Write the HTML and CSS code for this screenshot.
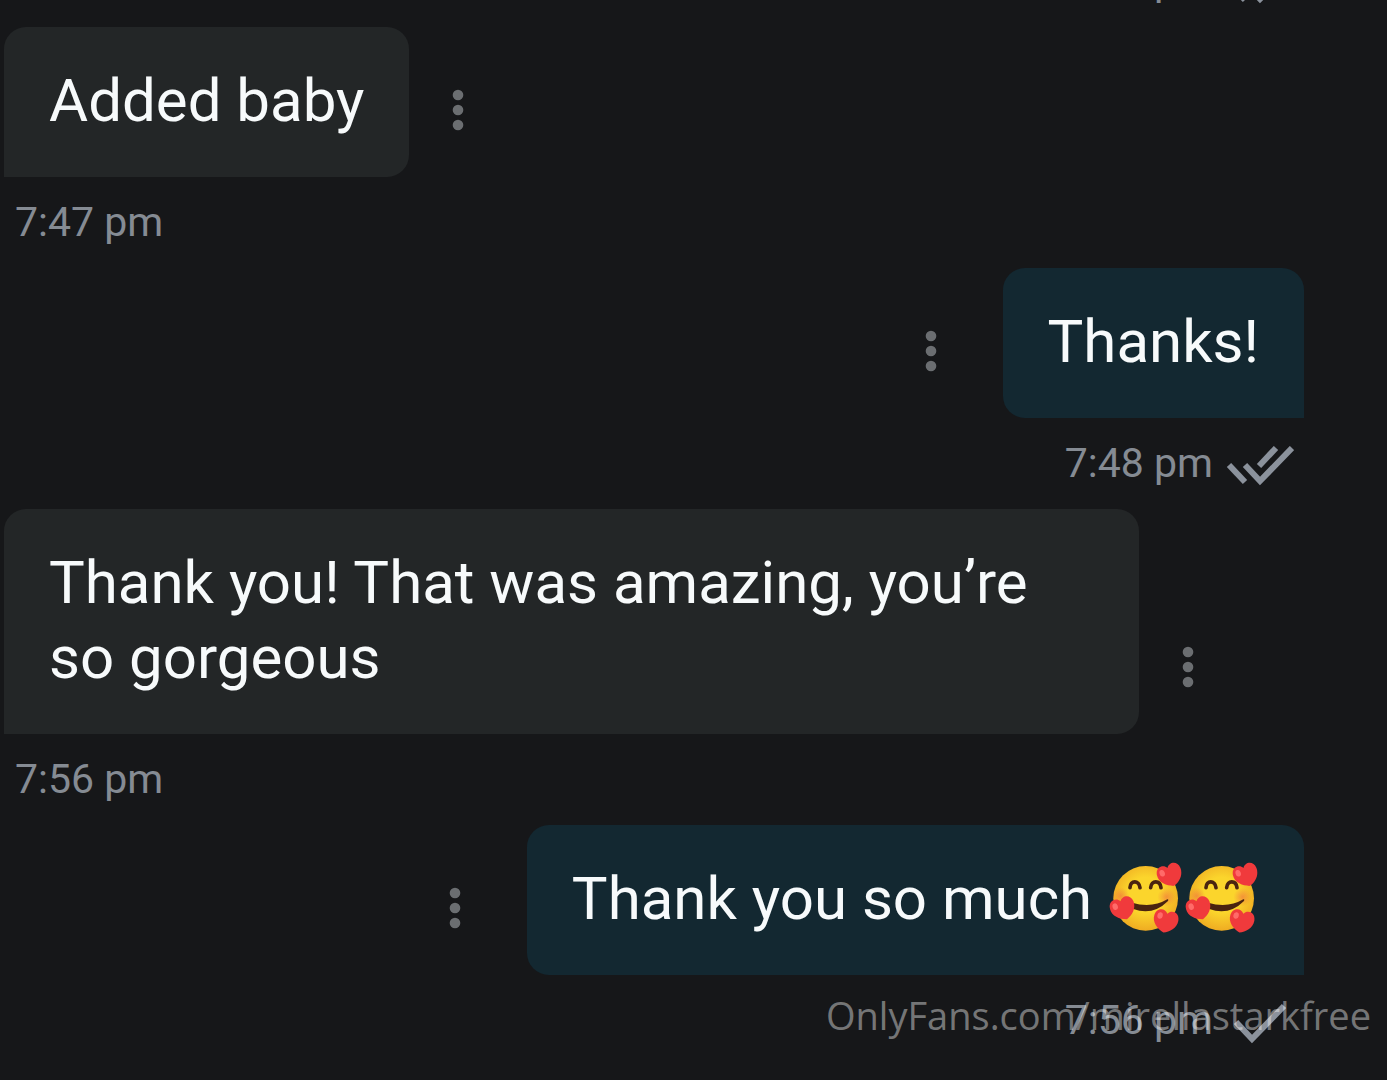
FILE: index.html
```
<!DOCTYPE html>
<html lang="en">
<head>
    <meta charset="UTF-8">
    <title>Chat</title>
    <link rel="stylesheet" href="styles.css">
</head>
<body>
    <!-- shared icons -->
    <svg class="icon-defs" aria-hidden="true">
        <symbol id="dots" viewBox="0 0 12 42">
            <circle cx="6" cy="6" r="5.3"/>
            <circle cx="6" cy="21" r="5.3"/>
            <circle cx="6" cy="36" r="5.3"/>
        </symbol>
        <symbol id="check" viewBox="0 0 68 42">
            <path d="M10 19 L26 36 L58 3"/>
        </symbol>
        <symbol id="double-check" viewBox="0 0 68 42">
            <path d="M3 19 L19 36"/>
            <path d="M19 19 L34 35 L66 2"/>
            <path d="M33 20 L50 2"/>
        </symbol>
        <radialGradient id="face" cx="0.5" cy="0.45" r="0.55">
            <stop offset="0.5" stop-color="#fbd52c"/>
            <stop offset="1" stop-color="#efac22"/>
        </radialGradient>
        <radialGradient id="blush">
            <stop offset="0" stop-color="#f2803c" stop-opacity="0.75"/>
            <stop offset="1" stop-color="#f2803c" stop-opacity="0"/>
        </radialGradient>
        <symbol id="hearts-face" viewBox="-9 0 228 216">
            <circle cx="107" cy="109" r="97" fill="url(#face)"/>
            <circle cx="32" cy="102" r="26" fill="url(#blush)"/>
            <circle cx="170" cy="105" r="28" fill="url(#blush)"/>
            <path d="M60 77 C61 54 87 54 90 77" class="eye"/>
            <path d="M122 77 C124 54 150 54 153 77" class="eye"/>
            <path d="M66 122 Q125 140 172 112 Q177 111 174 117 Q128 163 70 141 Z" fill="#4a2410"/>
            <g id="heart" transform="translate(179 38) rotate(-18)">
                <path d="M2 36 C-18 30 -39 14 -37 -9 C-35 -34 -9 -37 0 -21 C9 -37 35 -34 37 -9 C38 14 20 30 2 36 Z" fill="#f03a3c"/>
                <ellipse cx="-20" cy="-11" rx="8" ry="10" fill="#ff6b69"/>
            </g>
            <g transform="translate(38 138) rotate(-18)">
                <path d="M2 36 C-18 30 -39 14 -37 -9 C-35 -34 -9 -37 0 -21 C9 -37 35 -34 37 -9 C38 14 20 30 2 36 Z" fill="#f03a3c"/>
                <ellipse cx="-20" cy="-11" rx="8" ry="10" fill="#ff6b69"/>
            </g>
            <g transform="translate(167 176) rotate(14)">
                <path d="M2 36 C-18 30 -39 14 -37 -9 C-35 -34 -9 -37 0 -21 C9 -37 35 -34 37 -9 C38 14 20 30 2 36 Z" fill="#f03a3c"/>
                <ellipse cx="-20" cy="-11" rx="8" ry="10" fill="#ff6b69"/>
            </g>
        </symbol>
    </svg>

    <main class="chat">
        <div class="meta sent">
            <time>7:46 pm</time>
            <svg class="status"><use href="#double-check"/></svg>
        </div>

        <div class="message received">
            <p class="bubble">Added baby</p>
            <button class="menu" aria-label="Message options"><svg><use href="#dots"/></svg></button>
        </div>
        <div class="meta received">
            <time>7:47 pm</time>
        </div>

        <div class="message sent">
            <p class="bubble">Thanks!</p>
            <button class="menu" aria-label="Message options"><svg><use href="#dots"/></svg></button>
        </div>
        <div class="meta sent">
            <time>7:48 pm</time>
            <svg class="status"><use href="#double-check"/></svg>
        </div>

        <div class="message received">
            <p class="bubble">Thank you! That was amazing, you’re so gorgeous</p>
            <button class="menu" aria-label="Message options"><svg><use href="#dots"/></svg></button>
        </div>
        <div class="meta received">
            <time>7:56 pm</time>
        </div>

        <div class="message sent">
            <p class="bubble">Thank you so much <svg class="emoji"><use href="#hearts-face"/></svg><svg class="emoji"><use href="#hearts-face"/></svg></p>
            <button class="menu" aria-label="Message options"><svg><use href="#dots"/></svg></button>
        </div>
        <div class="meta sent">
            <time>7:56 pm</time>
            <svg class="status"><use href="#check"/></svg>
        </div>
    </main>

    <div class="watermark">OnlyFans.com/mirellastarkfree</div>
</body>
</html>
```
FILE: styles.css
```
* {
    margin: 0;
    padding: 0;
    box-sizing: border-box;
}

body {
    font-family: Roboto, sans-serif;
    background-color: #161719;
    color: #f7fafb;
    overflow: hidden;
}

.icon-defs {
    position: absolute;
    width: 0;
    height: 0;
}

/* newest message stays at the bottom, older ones run off the top */
.chat {
    display: flex;
    flex-direction: column;
    justify-content: flex-end;
    height: 100vh;
    padding: 0 83px 14px 4px;
    overflow: hidden;
}

.message {
    display: flex;
    align-items: flex-end;
    flex-shrink: 0;
}

.message.sent {
    flex-direction: row-reverse;
}

.bubble {
    max-width: calc(100% - 165px);
    padding: 36px 45px 39px;
    font-size: 60px;
    line-height: 75px;
    border-radius: 22px;
}

.received .bubble {
    background-color: #232627;
    border-bottom-left-radius: 0;
}

.sent .bubble {
    background-color: #132831;
    border-bottom-right-radius: 0;
}

.menu {
    flex-shrink: 0;
    margin: 0 43px 46px;
    background: none;
    border: none;
    cursor: pointer;
}

.sent .menu {
    margin-right: 66px;
}

.menu svg {
    display: block;
    width: 12px;
    height: 42px;
    fill: #6b6e71;
}

.meta {
    display: flex;
    flex-shrink: 0;
    gap: 13px;
    height: 91px;
    padding: 21px 10px 0 11px;
    font-size: 41px;
    line-height: 49px;
    color: #858b93;
}

.meta.sent {
    justify-content: flex-end;
}

.status {
    width: 68px;
    height: 42px;
    margin-top: 7px;
    fill: none;
    stroke: #8b929c;
    stroke-width: 6;
}

.emoji {
    width: 76px;
    height: 72px;
    vertical-align: -15px;
}

.eye {
    fill: none;
    stroke: #4a2410;
    stroke-width: 11;
    stroke-linecap: round;
}

.watermark {
    position: absolute;
    right: 16px;
    bottom: 39px;
    font-family: "Open Sans", sans-serif;
    font-size: 38px;
    line-height: 52px;
    color: rgba(255, 255, 255, 0.42);
}
```
